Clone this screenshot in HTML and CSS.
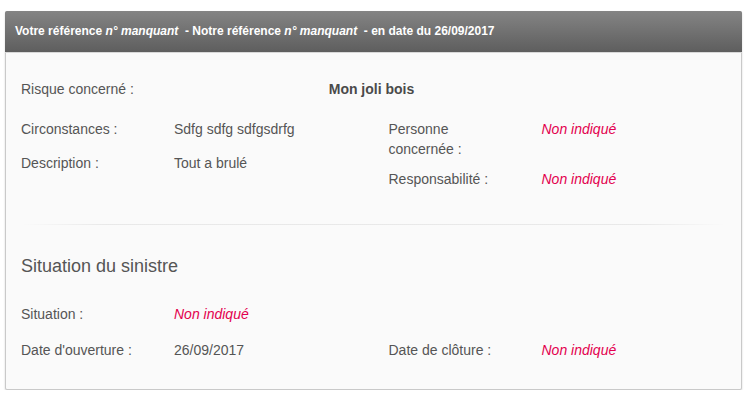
FILE: index.html
```html
<!DOCTYPE html>
<html lang="fr">
<head>
<meta charset="utf-8">
<title>Sinistre</title>
<link rel="stylesheet" href="styles.css">
</head>
<body>
<div class="panel">
  <div class="panel-heading">Votre référence <em>n° manquant</em> &nbsp;- Notre référence <em>n° manquant</em> &nbsp;- en date du 26/09/2017</div>
  <div class="panel-body">
    <div class="risk-row">
      <span class="label">Risque concerné :</span>
      <span class="risk-value">Mon joli bois</span>
    </div>
    <div class="cols">
      <div class="col col-left">
        <div class="field"><span class="label">Circonstances :</span><span class="value">Sdfg sdfg sdfgsdrfg</span></div>
        <div class="field"><span class="label">Description :</span><span class="value">Tout a brulé</span></div>
      </div>
      <div class="col col-right">
        <div class="field"><span class="label">Personne concernée :</span><span class="value missing">Non indiqué</span></div>
        <div class="field"><span class="label">Responsabilité :</span><span class="value missing">Non indiqué</span></div>
      </div>
    </div>
    <div class="divider"></div>
    <h3 class="section-title">Situation du sinistre</h3>
    <div class="cols cols-situation">
      <div class="col col-left">
        <div class="field"><span class="label">Situation :</span><span class="value missing">Non indiqué</span></div>
        <div class="field"><span class="label">Date d'ouverture :</span><span class="value">26/09/2017</span></div>
      </div>
      <div class="col col-right col-bottom">
        <div class="field"><span class="label">Date de clôture :</span><span class="value missing">Non indiqué</span></div>
      </div>
    </div>
  </div>
</div>
</body>
</html>
```
FILE: styles.css
```css
html, body {
  margin: 0;
  padding: 0;
  background: #ffffff;
}
body {
  padding: 11px 12px 0 5px;
  font-family: "Liberation Sans", Arial, sans-serif;
  font-size: 14px;
  line-height: 20px;
  color: #555555;
}
.panel {
  width: 737px;
  box-sizing: border-box;
  border: 1px solid #c9c9c9;
  border-radius: 2px;
  background: #fafafa;
  box-shadow: 0 1px 2px rgba(0, 0, 0, 0.18);
}
.panel-heading {
  height: 42px;
  box-sizing: border-box;
  padding: 10px 10px 0 10px;
  background: linear-gradient(to bottom, #848484 0%, #5e5e5e 100%);
  border-bottom: 1px solid #d8d8d8;
  color: #ffffff;
  font-size: 12px;
  font-weight: bold;
  line-height: 20px;
  margin: -1px -1px 0 -1px;
  border-radius: 2px 2px 0 0;
}
.panel-heading em {
  font-style: italic;
}
.panel-body {
  padding: 26px 15px 29px 15px;
}
.risk-row {
  display: grid;
  grid-template-columns: 1fr;
}
.risk-row > span {
  grid-row: 1;
  grid-column: 1;
}
.risk-row .label {
  justify-self: start;
}
.risk-value {
  justify-self: center;
  font-weight: bold;
  color: #4a4a4a;
  margin-right: 4px;
}
.cols {
  display: grid;
  grid-template-columns: 337.5px 337.5px;
  column-gap: 30px;
  margin-top: 20px;
}
.col {
  display: flex;
  flex-direction: column;
}
.col-left {
  gap: 14px;
}
.col-right {
  gap: 10px;
}
.cols-situation .col-left {
  gap: 16px;
}
.col-bottom {
  justify-content: flex-end;
}
.field {
  display: grid;
  grid-template-columns: 153px 1fr;
}
.field .label {
  padding-right: 30px;
}
.missing {
  color: #e3004e;
  font-style: italic;
}
.divider {
  height: 1px;
  margin: 35px 0 0 0;
  background: linear-gradient(to right, rgba(0,0,0,0) 0%, rgba(0,0,0,0.07) 12%, rgba(0,0,0,0.07) 88%, rgba(0,0,0,0) 100%);
}
.section-title {
  margin: 31px 0 0 0;
  font-size: 18px;
  font-weight: normal;
  line-height: 20px;
  color: #555555;
}
.section-title + .cols {
  margin-top: 28px;
}
```
